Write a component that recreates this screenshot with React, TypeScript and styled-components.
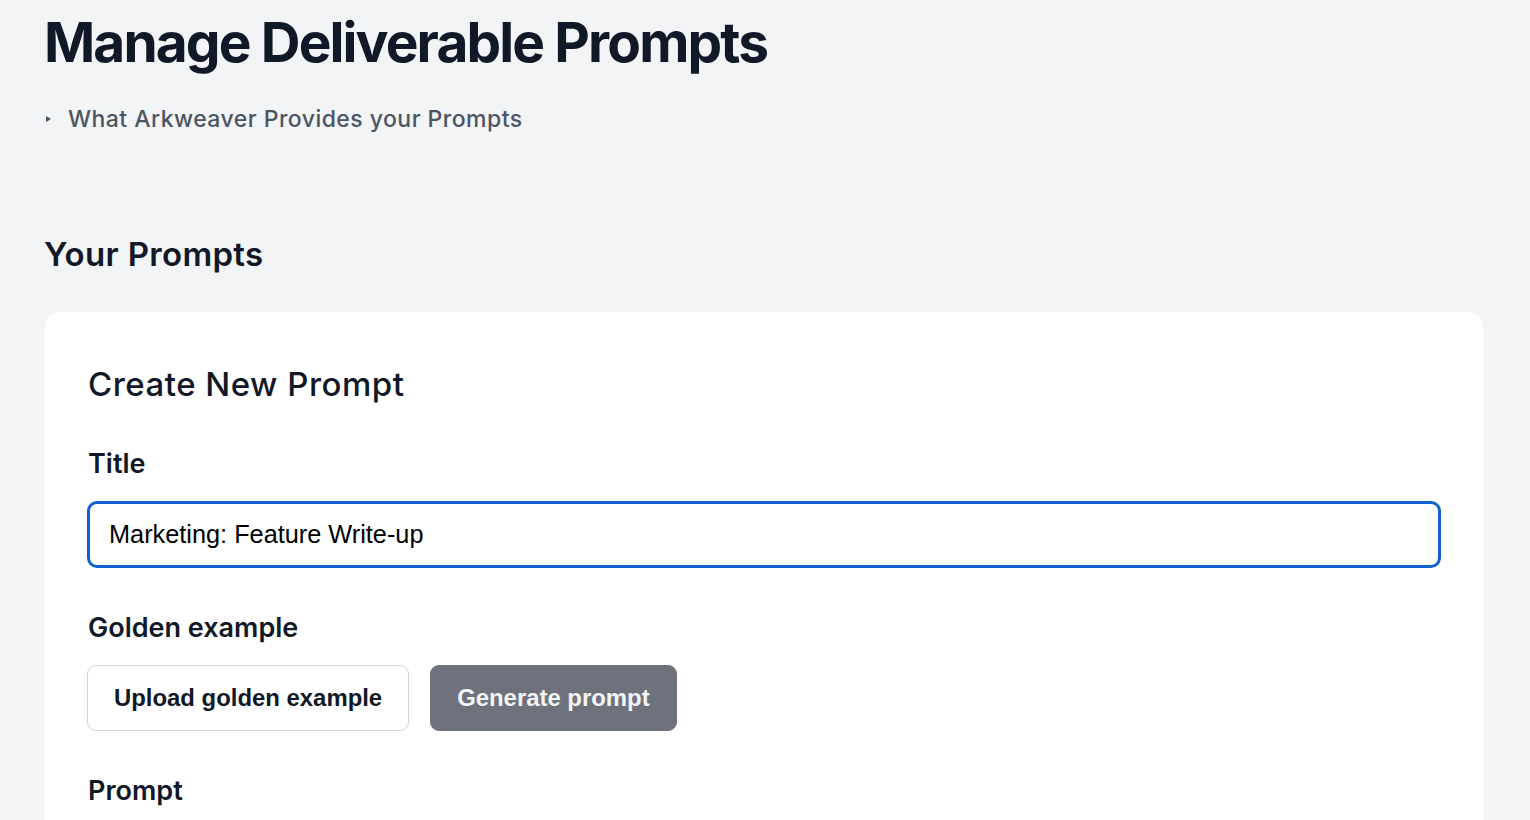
import React from "react";
import styled, { createGlobalStyle } from "styled-components";

const GlobalStyle = createGlobalStyle`
    html, body {
        margin: 0;
        padding: 0;
        background: #f3f4f6;
    }
    body {
        font-family: Inter, "Noto Sans", sans-serif;
        color: #111827;
    }
`;

const Page = styled.main`
    padding: 12px 46px 40px 44px;
`;

const PageTitle = styled.h1`
    margin: 0;
    font-size: 55px;
    line-height: 60px;
    font-weight: 700;
    letter-spacing: -0.034em;
    color: #111827;
`;

const Disclosure = styled.details`
    margin-top: 33px;
`;

const Summary = styled.summary`
    list-style: none;
    display: flex;
    align-items: center;
    gap: 17px;
    cursor: pointer;
    font-size: 23px;
    line-height: 28px;
    font-weight: 500;
    letter-spacing: 0.02em;
    color: #4b5563;

    &::-webkit-details-marker {
        display: none;
    }
`;

const Marker = styled.span`
    width: 0;
    height: 0;
    margin-left: 2px;
    border-left: 5px solid #4b5563;
    border-top: 3.5px solid transparent;
    border-bottom: 3.5px solid transparent;
`;

const SectionTitle = styled.h2`
    margin: 101px 0 0;
    font-size: 33px;
    line-height: 40px;
    font-weight: 600;
    letter-spacing: 0.01em;
    color: #111827;
`;

const Card = styled.section`
    margin-top: 38px;
    background: #fff;
    border-radius: 16px;
    box-shadow: 0 1px 3px rgba(17, 24, 39, 0.05);
    padding: 52px 43px 44px 44px;
`;

const CardTitle = styled.h3`
    margin: 0;
    font-size: 33px;
    line-height: 40px;
    font-weight: 500;
    letter-spacing: 0.015em;
    color: #111827;
`;

const Field = styled.div`
    margin-top: 44px;
    display: flex;
    flex-direction: column;
    gap: 21px;
`;

const Label = styled.label`
    font-size: 27px;
    line-height: 32px;
    font-weight: 600;
    color: #111827;
`;

const TextInput = styled.input`
    box-sizing: border-box;
    height: 67px;
    width: calc(100% + 1px);
    margin-left: -1px;
    padding: 0 19px;
    border: 3px solid #0f62d0;
    border-radius: 10px;
    outline: none;
    background: #fff;
    font-family: "Liberation Sans", Arial, sans-serif;
    font-size: 25.3px;
    color: #000;
`;

const ButtonRow = styled.div`
    display: flex;
    gap: 21px;
    margin-left: -1px;
`;

const Button = styled.button<{ $variant?: "outline" | "muted" }>`
    box-sizing: border-box;
    height: 66px;
    padding: 0 26px;
    border-radius: 9px;
    font-family: "Liberation Sans", Arial, sans-serif;
    font-size: 23.9px;
    font-weight: 700;
    cursor: pointer;
    border: 1px solid ${(p) => (p.$variant === "muted" ? "#6e727c" : "#d1d5db")};
    background: ${(p) => (p.$variant === "muted" ? "#6e727c" : "#fff")};
    color: ${(p) => (p.$variant === "muted" ? "#f3f4f6" : "#111827")};
`;

const PromptArea = styled.textarea`
    box-sizing: border-box;
    width: 100%;
    min-height: 220px;
    padding: 16px 18px;
    border: 1px solid #d1d5db;
    border-radius: 10px;
    font-family: "Liberation Sans", Arial, sans-serif;
    font-size: 22px;
    resize: vertical;
`;

export default function App() {
    return (
        <>
            <GlobalStyle />
            <Page>
                <PageTitle>Manage Deliverable Prompts</PageTitle>
                <Disclosure>
                    <Summary>
                        <Marker />
                        What Arkweaver Provides your Prompts
                    </Summary>
                </Disclosure>

                <SectionTitle>Your Prompts</SectionTitle>

                <Card>
                    <CardTitle>Create New Prompt</CardTitle>

                    <Field>
                        <Label htmlFor="prompt-title">Title</Label>
                        <TextInput id="prompt-title" defaultValue="Marketing: Feature Write-up" />
                    </Field>

                    <Field>
                        <Label>Golden example</Label>
                        <ButtonRow>
                            <Button $variant="outline">Upload golden example</Button>
                            <Button $variant="muted">Generate prompt</Button>
                        </ButtonRow>
                    </Field>

                    <Field>
                        <Label htmlFor="prompt-body">Prompt</Label>
                        <PromptArea id="prompt-body" />
                    </Field>
                </Card>
            </Page>
        </>
    );
}
